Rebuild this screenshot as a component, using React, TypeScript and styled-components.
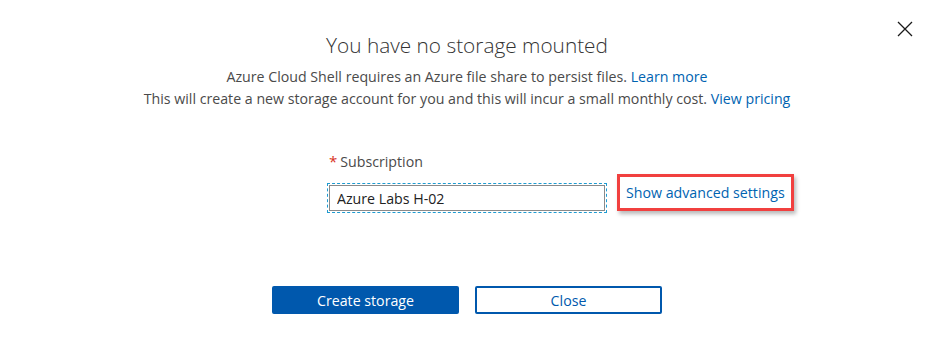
import styled, { createGlobalStyle } from 'styled-components';

const GlobalStyle = createGlobalStyle`
	html, body {
		margin: 0;
		padding: 0;
		background: #ffffff;
	}

	body {
		font-family: 'Open Sans', 'Noto Sans', sans-serif;
		color: #4a4a4a;
	}
`;

const Dialog = styled.section`
	position: relative;
	width: 934px;
	height: 343px;
	box-sizing: border-box;
	padding-top: 32px;
	display: flex;
	flex-direction: column;
	align-items: center;
	background: #ffffff;
`;

const CloseIcon = styled.button`
	position: absolute;
	top: 20px;
	right: 20px;
	width: 18px;
	height: 18px;
	padding: 0;
	border: none;
	background: none;
	cursor: pointer;
`;

const Title = styled.h1`
	margin: 0;
	font-size: 20.8px;
	line-height: 27px;
	font-weight: 300;
	color: #333333;
`;

const Intro = styled.p`
	margin: 7px 0 0;
	font-size: 14.2px;
	line-height: 22px;
	text-align: center;
	color: #4a4a4a;
`;

const Link = styled.a`
	color: #0063b1;
	text-decoration: none;
`;

const Form = styled.div`
	width: 100%;
	margin-top: 41px;
	display: grid;
	grid-template-columns: 1fr 280px 1fr;
	grid-template-rows: auto auto;
	row-gap: 11px;
`;

const Label = styled.label`
	grid-column: 2;
	font-size: 14.2px;
	line-height: 20px;
	color: #4a4a4a;
	padding-left: 2px;

	span {
		color: #d8301c;
		font-size: 15px;
		margin-right: 3px;
	}
`;

const Field = styled.div`
	grid-column: 2;
	height: 30px;
	box-sizing: border-box;
	border: 1px dashed #1f9bd0;
	padding: 1px;
`;

const Input = styled.input`
	width: 100%;
	height: 100%;
	box-sizing: border-box;
	border: 1px solid #8a8a8a;
	padding: 0 7px;
	font-family: 'Open Sans', 'Noto Sans', sans-serif;
	font-size: 14.2px;
	color: #222222;
	outline: none;
`;

const AdvancedCell = styled.div`
	grid-column: 3;
	padding-left: 10px;
	display: flex;
	align-items: center;
	margin-top: -11px;
`;

const Highlight = styled.div`
	height: 37px;
	box-sizing: border-box;
	border: 3px solid #f1403f;
	padding: 0 6px;
	display: flex;
	align-items: center;
	box-shadow: 2px 3px 4px rgba(0, 0, 0, 0.28);
	font-size: 14.2px;
	white-space: nowrap;
`;

const Actions = styled.div`
	margin-top: 73px;
	display: flex;
	gap: 16px;
`;

const Button = styled.button<{ $primary?: boolean }>`
	width: 187px;
	height: 28px;
	box-sizing: border-box;
	border-radius: 2px;
	border: 2px solid #0058ad;
	background: ${(props) => (props.$primary ? '#0058ad' : '#ffffff')};
	color: ${(props) => (props.$primary ? '#ffffff' : '#0058ad')};
	font-family: 'Open Sans', 'Noto Sans', sans-serif;
	font-size: 14.2px;
	cursor: pointer;
`;

const App = () => {
	return (
		<>
			<GlobalStyle />
			<Dialog>
				<CloseIcon aria-label="Close">
					<svg width="18" height="18" viewBox="0 0 18 18">
						<path d="M2 2 L16 16 M16 2 L2 16" stroke="#1a1a1a" strokeWidth="1.3" fill="none" />
					</svg>
				</CloseIcon>
				<Title>You have no storage mounted</Title>
				<Intro>
					Azure Cloud Shell requires an Azure file share to persist files. <Link href="#">Learn more</Link>
					<br />
					This will create a new storage account for you and this will incur a small monthly cost.{' '}
					<Link href="#">View pricing</Link>
				</Intro>
				<Form>
					<Label>
						<span>*</span>Subscription
					</Label>
					<Field>
						<Input defaultValue="Azure Labs H-02" />
					</Field>
					<AdvancedCell>
						<Highlight>
							<Link href="#">Show advanced settings</Link>
						</Highlight>
					</AdvancedCell>
				</Form>
				<Actions>
					<Button $primary>Create storage</Button>
					<Button>Close</Button>
				</Actions>
			</Dialog>
		</>
	);
};

export default App;
